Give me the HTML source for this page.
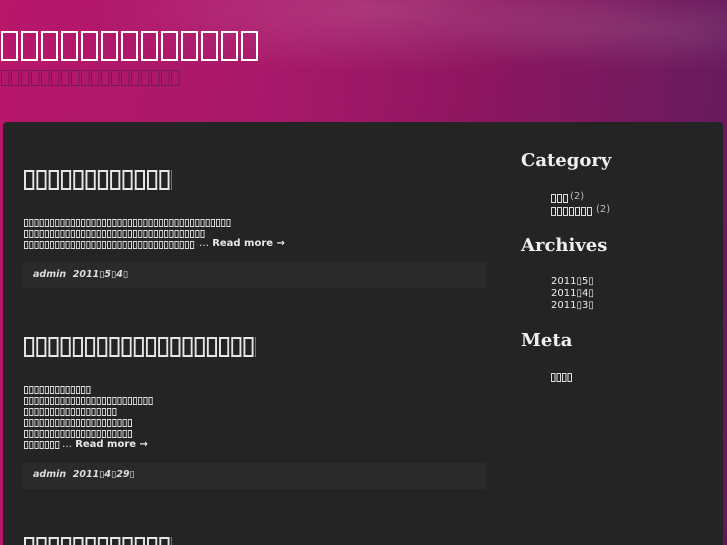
<!DOCTYPE html>
<html style="overflow:hidden;height:545px"><head><meta charset="utf-8"><style>
body{margin:0;width:727px;height:545px;overflow:hidden;position:relative;font-family:"DejaVu Sans","Liberation Sans",sans-serif;
background:linear-gradient(100deg,#b8176a 0%,#a8186a 35%,#8e1660 60%,#6e1a5e 85%,#5a1a5a 100%);}
.sw{position:absolute;left:0;top:0;width:727px;height:122px;background:radial-gradient(ellipse 420px 90px at 380px 10px,rgba(255,255,255,.14),transparent 70%),radial-gradient(ellipse 300px 60px at 650px 30px,rgba(255,255,255,.1),transparent 70%);}
.bx{position:absolute;display:block;color:transparent;overflow:hidden;white-space:nowrap;font-size:1px;
background-image:linear-gradient(to right,var(--c) var(--b),transparent var(--b),transparent calc(var(--p) - var(--g) - var(--b)),var(--c) calc(var(--p) - var(--g) - var(--b)),var(--c) calc(var(--p) - var(--g)),transparent calc(var(--p) - var(--g))),linear-gradient(to bottom,var(--c) var(--b),transparent var(--b),transparent calc(var(--h) - var(--b)),var(--c) calc(var(--h) - var(--b)));background-size:var(--p) var(--h);background-repeat:repeat-x;height:var(--h);
-webkit-mask-image:linear-gradient(to right,#000 calc(var(--p) - var(--g)),transparent calc(var(--p) - var(--g)));-webkit-mask-size:var(--p) 100%;-webkit-mask-repeat:repeat-x;
mask-image:linear-gradient(to right,#000 calc(var(--p) - var(--g)),transparent calc(var(--p) - var(--g)));mask-size:var(--p) 100%;mask-repeat:repeat-x}
.t{--c:#fff;--p:20px;--h:30px;--b:2px;--g:3px}
.s{--c:#6a1c55;--p:10px;--h:16px;--b:1px;--g:1.5px}
.h{--c:#e6e6e6;--p:12.3px;--h:20px;--b:2px;--g:2px}
.x{--c:#ddd;--p:5.2px;--h:8px;--b:1px;--g:0.8px}
.c{--c:#ddd;--p:6px;--h:9px;--b:1px;--g:0.8px}
.m{--c:#ddd;--p:5.5px;--h:9px;--b:1px;--g:0.8px}
.panel{position:absolute;left:3px;top:122px;width:720px;height:423px;background:#242424;border-radius:4px 4px 0 0}
.bar{position:absolute;left:22px;width:465px;height:26px;background:#2a2a2a}
.txt{position:absolute;color:#e8e8e8;font-size:10px;white-space:nowrap}
.rm{font-weight:bold}
.meta{position:absolute;color:#ddd;font-size:9.5px;font-weight:bold;font-style:italic;white-space:nowrap}
.hd{position:absolute;left:521px;color:#f0f0f0;font-family:"DejaVu Serif","Liberation Serif",serif;font-weight:bold;font-size:18px}
.li{position:absolute;left:551px;color:#eee;font-size:10px;white-space:nowrap}
</style></head><body>
<div class="sw"></div>
<span class="bx t" style="left:1px;top:31px;width:260px">サイトタイトル</span>
<span class="bx s" style="left:1px;top:70px;width:180px">サイトの説明</span>
<div class="panel"></div>

<span class="bx h" style="left:24px;top:170px;width:148px">記事タイトル</span>
<span class="bx x" style="left:24px;top:219px;width:207px">本文</span>
<span class="bx x" style="left:24px;top:230px;width:181px">本文</span>
<span class="bx x" style="left:24px;top:241px;width:171px">本文</span>
<span class="txt" style="left:199px;top:238px">… <span class="rm">Read more →</span></span>
<div class="bar" style="top:262px"></div>
<span class="meta" style="left:33px;top:269px">admin&nbsp; 2011▯5▯4▯</span>

<span class="bx h" style="left:24px;top:337px;width:232px;--p:12.2px">記事タイトル</span>
<span class="bx x" style="left:24px;top:386px;width:67px">本文</span>
<span class="bx x" style="left:24px;top:397px;width:129px">本文</span>
<span class="bx x" style="left:24px;top:408px;width:93px">本文</span>
<span class="bx x" style="left:24px;top:419px;width:109px">本文</span>
<span class="bx x" style="left:24px;top:430px;width:109px">本文</span>
<span class="bx x" style="left:24px;top:441px;width:36px">本文</span>
<span class="txt" style="left:62px;top:439px">… <span class="rm">Read more →</span></span>
<div class="bar" style="top:463px"></div>
<span class="meta" style="left:33px;top:469px">admin&nbsp; 2011▯4▯29▯</span>

<span class="bx h" style="left:24px;top:537px;width:148px">記事タイトル</span>

<div class="hd" style="top:150px">Category</div>
<span class="bx c" style="left:551px;top:194px;width:18px">未分類</span><span class="li" style="left:570px;top:191px;color:#bbb">(2)</span>
<span class="bx c" style="left:551px;top:207px;width:42px">カテゴリ</span><span class="li" style="left:596px;top:204px;color:#bbb">(2)</span>
<div class="hd" style="top:235px">Archives</div>
<span class="li" style="top:276px">2011▯5▯</span>
<span class="li" style="top:288px">2011▯4▯</span>
<span class="li" style="top:300px">2011▯3▯</span>
<div class="hd" style="top:330px">Meta</div>
<span class="bx m" style="left:551px;top:373px;width:22px">ログイン</span>
</body></html>
